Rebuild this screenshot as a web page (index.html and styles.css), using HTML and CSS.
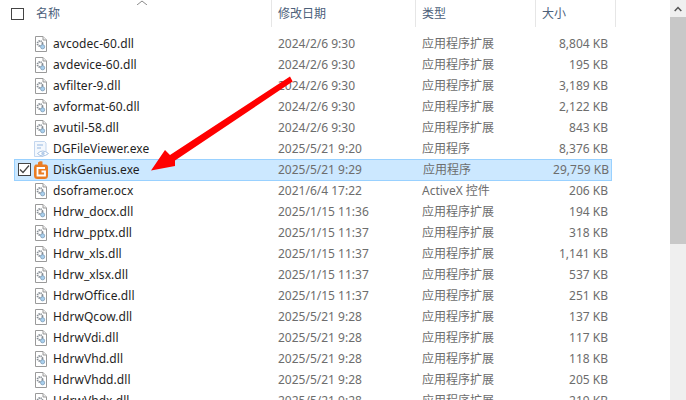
FILE: index.html
```html
<!DOCTYPE html>
<html lang="zh-CN">
<head>
<meta charset="utf-8">
<title>文件列表</title>
<link rel="stylesheet" href="styles.css">
</head>
<body>
<svg class="defs" width="0" height="0" aria-hidden="true">
  <symbol id="dll" viewBox="0 0 12 16">
    <path d="M.5.5h7.500l3.500 3.500v11.500h-11z" fill="#fff" stroke="#9a9a9a"/>
    <path d="M8 .5v3.500h3.500" fill="#eee" stroke="#9a9a9a"/>
    <circle cx="5" cy="7.500" r="2.500" fill="none" stroke="#858c93" stroke-width="1.800" stroke-dasharray="1.300 .7"/>
    <circle cx="7.600" cy="10.800" r="2.100" fill="#a9d0ee" stroke="#7f9db8" stroke-width=".8"/>
  </symbol>
</svg>
<main class="explorer">
  <div class="files">
    <header class="head">
      <span class="head-check"></span>
      <svg class="sort" width="12" height="5" viewBox="0 0 12 5"><path d="M1 5l5-4 5 4" fill="none" stroke="#8a8a8a"/></svg>
      <span class="col col-name">名称</span>
      <span class="col col-date">修改日期</span>
      <span class="col col-type">类型</span>
      <span class="col col-size">大小</span>
      <span class="col col-end"></span>
    </header>
    <ul class="rows">
      <li class="row"><span class="name"><svg class="ico"><use href="#dll"/></svg>avcodec-60.dll</span><span>2024/2/6 9:30</span><span>应用程序扩展</span><span class="size">8,804 KB</span></li>
      <li class="row"><span class="name"><svg class="ico"><use href="#dll"/></svg>avdevice-60.dll</span><span>2024/2/6 9:30</span><span>应用程序扩展</span><span class="size">195 KB</span></li>
      <li class="row"><span class="name"><svg class="ico"><use href="#dll"/></svg>avfilter-9.dll</span><span>2024/2/6 9:30</span><span>应用程序扩展</span><span class="size">3,189 KB</span></li>
      <li class="row"><span class="name"><svg class="ico"><use href="#dll"/></svg>avformat-60.dll</span><span>2024/2/6 9:30</span><span>应用程序扩展</span><span class="size">2,122 KB</span></li>
      <li class="row"><span class="name"><svg class="ico"><use href="#dll"/></svg>avutil-58.dll</span><span>2024/2/6 9:30</span><span>应用程序扩展</span><span class="size">843 KB</span></li>
      <li class="row"><span class="name"><svg class="ico ico-viewer" viewBox="0 0 16 16"><path d="M1.500.500h10l1.500 1.500v9h-3v4.500h-8.500z" fill="#f4f8fd" stroke="#c3d6ee"/><path d="M4 4h6M4 7h4" stroke="#b5cdea" stroke-width="1.300"/><path d="M4.500 12.500q5-5 11 0q-6 5-11 0z" fill="#fff" stroke="#a9c3e3"/><circle cx="10" cy="12.500" r="1.700" fill="#b5cdea"/></svg>DGFileViewer.exe</span><span>2025/5/21 9:20</span><span>应用程序</span><span class="size">8,376 KB</span></li>
      <li class="row selected"><span class="pick"><svg width="11" height="9" viewBox="0 0 11 9"><path d="M1 4.500l3 3 6-7" fill="none" stroke="#444" stroke-width="1.200"/></svg></span><span class="name"><svg class="ico ico-app" viewBox="0 0 14 18"><path d="M4 1.500q2-2 4.500-1v3h3q2.500 0 2.500 3v8q0 3.500-3.500 3.500h-7q-3.500 0-3.500-3.500v-8q0-2 1.500-3h2.500z" fill="#ea7d24"/><path d="M11 7h-7.500v7.500h7.500v-4h-3.500" fill="none" stroke="#fff" stroke-width="1.800"/></svg>DiskGenius.exe</span><span>2025/5/21 9:29</span><span>应用程序</span><span class="size">29,759 KB</span></li>
      <li class="row"><span class="name"><svg class="ico"><use href="#dll"/></svg>dsoframer.ocx</span><span>2021/6/4 17:22</span><span>ActiveX 控件</span><span class="size">206 KB</span></li>
      <li class="row"><span class="name"><svg class="ico"><use href="#dll"/></svg>Hdrw_docx.dll</span><span>2025/1/15 11:36</span><span>应用程序扩展</span><span class="size">194 KB</span></li>
      <li class="row"><span class="name"><svg class="ico"><use href="#dll"/></svg>Hdrw_pptx.dll</span><span>2025/1/15 11:37</span><span>应用程序扩展</span><span class="size">318 KB</span></li>
      <li class="row"><span class="name"><svg class="ico"><use href="#dll"/></svg>Hdrw_xls.dll</span><span>2025/1/15 11:37</span><span>应用程序扩展</span><span class="size">1,141 KB</span></li>
      <li class="row"><span class="name"><svg class="ico"><use href="#dll"/></svg>Hdrw_xlsx.dll</span><span>2025/1/15 11:37</span><span>应用程序扩展</span><span class="size">537 KB</span></li>
      <li class="row"><span class="name"><svg class="ico"><use href="#dll"/></svg>HdrwOffice.dll</span><span>2025/1/15 11:37</span><span>应用程序扩展</span><span class="size">251 KB</span></li>
      <li class="row"><span class="name"><svg class="ico"><use href="#dll"/></svg>HdrwQcow.dll</span><span>2025/5/21 9:28</span><span>应用程序扩展</span><span class="size">137 KB</span></li>
      <li class="row"><span class="name"><svg class="ico"><use href="#dll"/></svg>HdrwVdi.dll</span><span>2025/5/21 9:28</span><span>应用程序扩展</span><span class="size">117 KB</span></li>
      <li class="row"><span class="name"><svg class="ico"><use href="#dll"/></svg>HdrwVhd.dll</span><span>2025/5/21 9:28</span><span>应用程序扩展</span><span class="size">118 KB</span></li>
      <li class="row"><span class="name"><svg class="ico"><use href="#dll"/></svg>HdrwVhdd.dll</span><span>2025/5/21 9:28</span><span>应用程序扩展</span><span class="size">205 KB</span></li>
      <li class="row"><span class="name"><svg class="ico"><use href="#dll"/></svg>HdrwVhdx.dll</span><span>2025/5/21 9:28</span><span>应用程序扩展</span><span class="size">219 KB</span></li>
    </ul>
  </div>
  <div class="scrollbar">
    <div class="scroll-up"><svg width="8" height="6" viewBox="0 0 8 6"><path d="M.7 5L4 1.500 7.300 5" fill="none" stroke="#555" stroke-width="1.500"/></svg></div>
    <div class="scroll-thumb"></div>
  </div>
  <svg class="arrow" width="686" height="400" viewBox="0 0 686 400" aria-hidden="true">
    <path d="M290 76.500L292.700 81.500L175 160.500L175 166L151 170.500L165 150L170 155z" fill="#f00"/>
  </svg>
</main>
</body>
</html>
```
FILE: styles.css
```css
* { box-sizing: border-box; }
html, body { margin: 0; height: 100%; }
body {
  background: #fff;
  overflow: hidden;
  font-family: "Noto Sans", "Noto Sans CJK SC", sans-serif;
  font-size: 12px;
  color: #6d6d6d;
}
.defs { position: absolute; }
.explorer { position: relative; display: flex; width: 686px; height: 400px; overflow: hidden; }
.files { flex: 0 0 670px; min-width: 0; }
.head { position: relative; display: flex; height: 33px; color: #4c607a; font-size: 12px; }
.head-check { position: absolute; left: 11px; top: 8px; width: 13px; height: 12px; border: 1px solid #444; }
.sort { position: absolute; left: 136px; top: 0; }
.col { height: 27px; line-height: 27px; padding-left: 6px; border-right: 1px solid #e6e6e6; }
.col-name { width: 272px; padding-left: 36px; }
.col-date { width: 144px; }
.col-type { width: 120px; }
.col-size { width: 80px; }
.col-end { border: 0; }
.rows { list-style: none; margin: 0; padding: 0 0 0 14px; }
.row {
  position: relative;
  display: grid;
  grid-template-columns: 264px 144px 120px 70px;
  width: 598px;
  height: 21px;
  line-height: 21px;
  white-space: nowrap;
}
.name { display: flex; align-items: center; padding-left: 21px; color: #1f1f1f; letter-spacing: .06px; }
.ico { width: 12px; height: 16px; margin-right: 6px; flex: none; }
.ico-viewer { width: 16px; margin-left: -2px; margin-right: 4px; }
.ico-app { width: 14px; height: 18px; margin-left: -1px; margin-right: 5px; }
.size { text-align: right; padding-right: 4px; }
.selected { height: 22px; margin-bottom: -1px; background: #cce8ff; border: 1px solid #99d1ff; line-height: 20px; }
.selected > .name { padding-left: 20px; }
.selected > span:nth-child(3) { margin-left: -1px; }
.pick {
  position: absolute;
  left: 3px;
  top: 3px;
  width: 13px;
  height: 13px;
  display: flex;
  align-items: center;
  justify-content: center;
  border: 1px solid #444;
  background: #fff;
}
.scrollbar { flex: 0 0 16px; background: #efefef; }
.scroll-up { height: 17px; background: #f0f0f0; display: flex; align-items: center; justify-content: center; }
.scroll-thumb { height: 227px; background: #c8c8c8; }
.arrow { position: absolute; left: 0; top: 0; pointer-events: none; }
```
